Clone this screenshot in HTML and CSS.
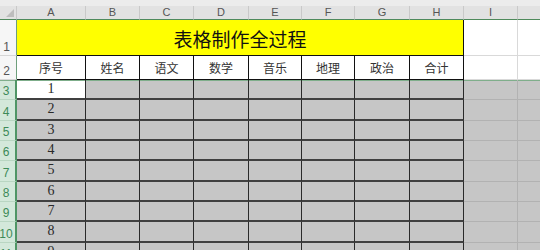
FILE: index.html
```html
<!DOCTYPE html>
<html lang="zh">
<head>
    <meta charset="UTF-8">
    <title>表格制作全过程</title>
    <link rel="stylesheet" href="styles.css">
</head>
<body>
    <div class="topbar"></div>
    <div class="sheet">
        <!-- column headers -->
        <div class="corner"><span class="tri"></span></div>
        <div class="col">A</div>
        <div class="col">B</div>
        <div class="col">C</div>
        <div class="col">D</div>
        <div class="col">E</div>
        <div class="col">F</div>
        <div class="col">G</div>
        <div class="col">H</div>
        <div class="col">I</div>
        <div class="col"></div>

        <!-- row 1: merged title -->
        <div class="rh">1</div>
        <div class="title">表格制作全过程</div>
        <div class="cell"></div>
        <div class="cell"></div>

        <!-- row 2: table heads -->
        <div class="rh">2</div>
        <div class="th">序号</div>
        <div class="th">姓名</div>
        <div class="th">语文</div>
        <div class="th">数学</div>
        <div class="th">音乐</div>
        <div class="th">地理</div>
        <div class="th">政治</div>
        <div class="th">合计</div>
        <div class="cell"></div>
        <div class="cell"></div>
    </div>

    <script>
        // Строим строки данных 3..11
        const sheet = document.querySelector('.sheet');
        for (let r = 3; r <= 11; r++) {
            const first = r === 3 ? ' first' : '';
            let html = '<div class="rh sel' + first + '">' + r + '</div>';
            html += '<div class="td num' + (r === 3 ? ' active' : '') + first + '">' + (r - 2) + '</div>';
            for (let c = 0; c < 7; c++) {
                html += '<div class="td' + first + '"></div>';
            }
            html += '<div class="ex' + first + '"></div><div class="ex' + first + '"></div>';
            sheet.insertAdjacentHTML('beforeend', html);
        }
    </script>
</body>
</html>
```

FILE: styles.css
```css
* {
    box-sizing: border-box;
}

body {
    margin: 0;
    width: 540px;
    height: 250px;
    overflow: hidden;
    background: #fff;
    font-family: 'Noto Sans CJK SC', sans-serif;
}

.topbar {
    height: 6px;
    background: #ececec;
}

.sheet {
    display: grid;
    grid-template-columns: 17px 69px 54px 54px 55px 53px 53px 55px 54px 54px 54px;
    grid-template-rows: 14px 36px 24px repeat(9, 20.33px);
    width: 572px;
}

.corner {
    position: relative;
    background: #e2e2e2;
    border-right: 1px solid #c9c9c9;
    border-bottom: 1px solid #4f8a5c;
}

.tri {
    position: absolute;
    right: 2px;
    bottom: 2px;
    width: 0;
    height: 0;
    border-left: 8px solid transparent;
    border-bottom: 8px solid #bdbdbd;
}

.col {
    background: #e2e2e2;
    border-right: 1px solid #c9c9c9;
    border-bottom: 1px solid #4f8a5c;
    color: #555;
    font-family: 'Liberation Sans', sans-serif;
    font-size: 11px;
    line-height: 13px;
    text-align: center;
}

.rh {
    display: flex;
    align-items: flex-end;
    justify-content: center;
    padding: 0 3px 1px 0;
    background: #f6f6f6;
    border-right: 1px solid #6e9f7b;
    border-bottom: 1px solid #d6d6d6;
    color: #555;
    font-family: 'Liberation Sans', sans-serif;
    font-size: 12px;
    line-height: 14px;
}

.rh.sel {
    background: #d3e8da;
    border-right: 2px solid #4f9565;
    border-bottom: 1px solid #b9d6c2;
    color: #3d8a58;
}

.title {
    grid-column: 2 / 10;
    display: flex;
    align-items: center;
    justify-content: center;
    background: #ffff00;
    border-right: 1px solid #111;
    border-bottom: 1px solid #111;
    color: #111;
    font-size: 19px;
    padding-top: 1px;
}

.cell {
    border-right: 1px solid #d9d9d9;
    border-bottom: 1px solid #d9d9d9;
}

.th {
    display: flex;
    align-items: center;
    justify-content: center;
    border-right: 1px solid #111;
    border-bottom: 1px solid #111;
    color: #333;
    font-size: 12px;
}

.td {
    background: #c6c6c6;
    border-right: 1px solid #2a2a2a;
    border-bottom: 2px solid #404040;
}

.ex {
    background: #c6c6c6;
    border-right: 1px solid #b2b2b2;
    border-bottom: 1px solid #b2b2b2;
}

.num {
    display: flex;
    align-items: center;
    justify-content: center;
    color: #2a2a2a;
    font-family: 'Liberation Serif', serif;
    font-size: 14px;
}

.active {
    background: #fff;
}

.first {
    box-shadow: inset 0 1px 0 #7fae8b;
}
```
